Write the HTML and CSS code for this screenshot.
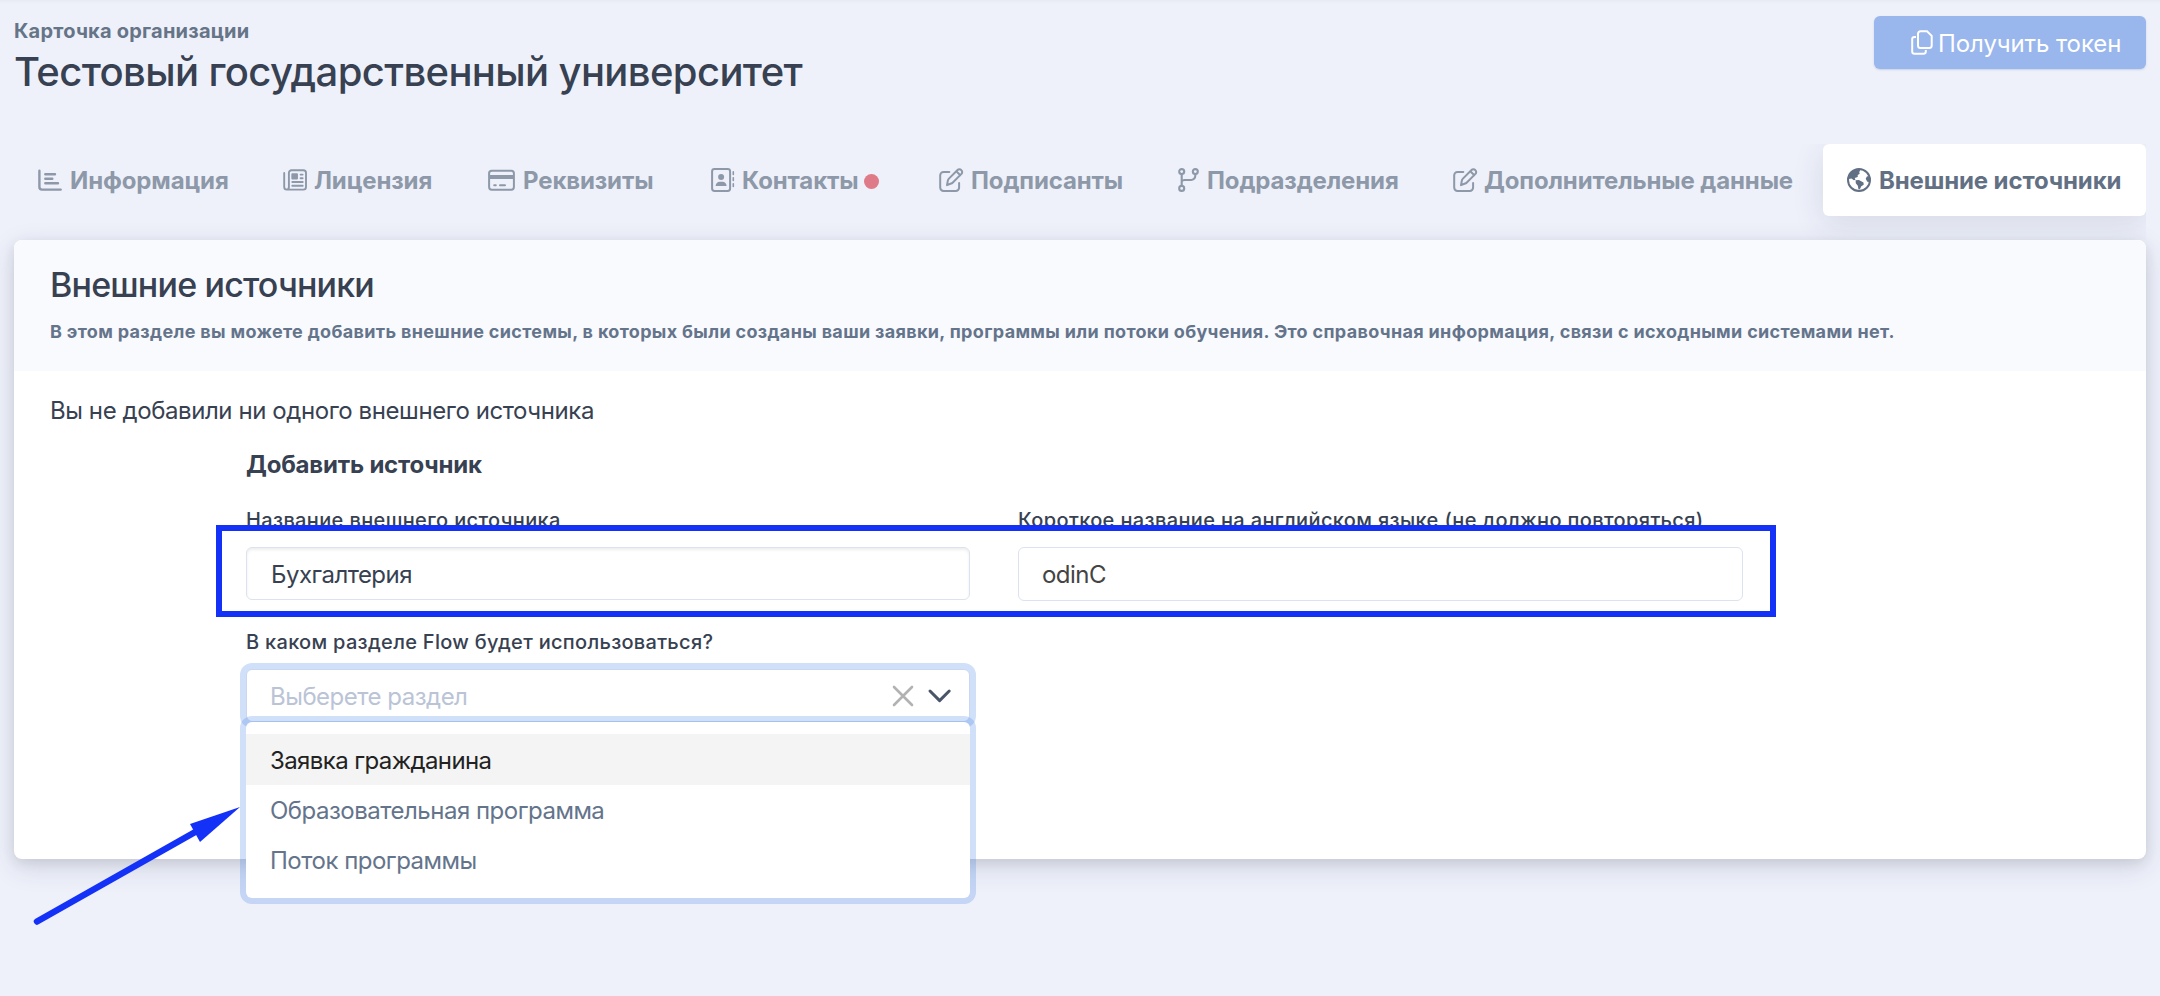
FILE: index.html
```html
<!DOCTYPE html>
<html lang="ru">
<head>
<meta charset="utf-8">
<title>Карточка организации</title>
<link rel="stylesheet" href="styles.css">
</head>
<body>
<div class="page">
  <header class="head">
    <div>
      <div class="pretitle">Карточка организации</div>
      <h1 class="title">Тестовый государственный университет</h1>
    </div>
    <button class="btn">
      <svg class="ico" width="22" height="25" viewBox="0 0 22 25"><g fill="none" stroke="currentColor" stroke-width="2"><path d="M9.500 1.200h6.500l4.700 4.700v9.600a2.500 2.500 0 0 1-2.500 2.500h-8.700a2.500 2.500 0 0 1-2.500-2.500V3.700a2.500 2.500 0 0 1 2.500-2.500z"/><path d="M5 7H3.500A2.300 2.300 0 0 0 1.200 9.300v12.200a2.300 2.300 0 0 0 2.300 2.300h9a2.300 2.300 0 0 0 2.300-2.300V20"/></g></svg>
      <span class="btn-text">Получить токен</span>
    </button>
  </header>
  <nav class="tabs">
    <a class="tab"><svg class="ico" width="24" height="24" viewBox="0 0 24 24"><g fill="none" stroke="currentColor" stroke-width="2.400" stroke-linecap="round" stroke-linejoin="round"><path d="M1.400 2.800v16.200a2.600 2.600 0 0 0 2.600 2.600h18.700M7.300 6.300h9.700M7.300 10.800h7M7.300 15.300h12.700"/></g></svg><span>Информация</span></a>
    <a class="tab"><svg class="ico" width="24" height="24" viewBox="0 0 24 24"><g fill="none" stroke="currentColor" stroke-width="1.900" stroke-linecap="round" stroke-linejoin="round"><path d="M1.200 5v14a2.600 2.600 0 0 0 2.600 2.600h16.600a2.600 2.600 0 0 0 2.600-2.600V4.800a2.600 2.600 0 0 0-2.600-2.600H8.500A2.600 2.600 0 0 0 5.900 4.800V19a2.500 2.500 0 0 1-2.300 2.600M9.300 14h10.400M9.300 17.800h10.400M17.600 6.600h2M17.600 10.300h2"/><rect x="9.300" y="6.200" width="4.700" height="4.400" fill="currentColor"/></g></svg><span>Лицензия</span></a>
    <a class="tab"><svg class="ico" width="27" height="24" viewBox="0 0 27 24"><rect x="1.100" y="2.700" width="24.800" height="19" rx="2.600" fill="none" stroke="currentColor" stroke-width="2"/><path fill="currentColor" d="M1 7h25v4H1z"/><path d="M6.200 17.300h1.600M12 17.300h5" stroke="currentColor" stroke-width="2" stroke-linecap="round"/></svg><span>Реквизиты</span></a>
    <a class="tab"><svg class="ico" width="24" height="24" viewBox="0 0 24 24"><rect x="1.100" y="1.100" width="18" height="21.800" rx="2.400" fill="none" stroke="currentColor" stroke-width="2"/><circle cx="10.100" cy="8.900" r="3" fill="currentColor"/><path fill="currentColor" d="M4.600 18c0-2.600 2-4.300 4-4.300h3c2 0 4 1.700 4 4.300z"/><path d="M22.300 3.800v2.600M22.300 9.800v2.600M22.300 15.800v2.600" stroke="currentColor" stroke-width="1.600" stroke-linecap="round"/></svg><span>Контакты</span><i class="dot"></i></a>
    <a class="tab"><svg class="ico" width="25" height="24" viewBox="0 0 25 24"><g fill="none" stroke="currentColor" stroke-width="2" stroke-linecap="round" stroke-linejoin="round"><path d="M10.300 4H4.500A3.300 3.300 0 0 0 1.200 7.300v12.300a3.300 3.300 0 0 0 3.300 3.300h12.300a3.300 3.300 0 0 0 3.300-3.300v-4.500M8 17.100l.9-4.700a3 3 0 0 1 .8-1.500l8.800-8.900a2.500 2.500 0 0 1 3.700 0l.2.200a2.500 2.500 0 0 1 0 3.700l-8.800 8.800a3 3 0 0 1-1.500.8zM17.300 3.300l4 4"/></g></svg><span>Подписанты</span></a>
    <a class="tab"><svg class="ico" width="21" height="24" viewBox="0 0 21 24"><g fill="none" stroke="currentColor" stroke-width="2.100"><circle cx="3.700" cy="3.600" r="2.500"/><circle cx="17.300" cy="3.600" r="2.500"/><circle cx="3.700" cy="20.400" r="2.500"/><path d="M3.700 6v12M3.700 13.500c.6-1 1.600-1.500 2.800-1.500H13a4.200 4.200 0 0 0 4.300-4.200V6"/></g></svg><span>Подразделения</span></a>
    <a class="tab"><svg class="ico" width="25" height="24" viewBox="0 0 25 24"><g fill="none" stroke="currentColor" stroke-width="2" stroke-linecap="round" stroke-linejoin="round"><path d="M10.300 4H4.500A3.300 3.300 0 0 0 1.200 7.300v12.300a3.300 3.300 0 0 0 3.300 3.300h12.300a3.300 3.300 0 0 0 3.300-3.300v-4.500M8 17.100l.9-4.700a3 3 0 0 1 .8-1.500l8.800-8.900a2.500 2.500 0 0 1 3.700 0l.2.200a2.500 2.500 0 0 1 0 3.700l-8.800 8.800a3 3 0 0 1-1.500.8zM17.300 3.300l4 4"/></g></svg><span>Дополнительные данные</span></a>
    <a class="tab tab-active"><svg class="ico" width="24" height="24" viewBox="0 0 24 24"><circle cx="12" cy="12" r="11" fill="none" stroke="currentColor" stroke-width="2"/><path fill="currentColor" d="M1.500 11C2 5.500 6 1.500 11.500 1l1.700 1.500-1 1.500.5 1.800-2 1.200v2l-3 1 .8 1.800-1.700.4-2.300-1.700z"/><path fill="currentColor" d="M8.600 12.200l3.300-.3 4.600 2.600.2 2.200-2.400 1.600-1.400 3-1.400.2-.7-3.800-2-2.500z"/><path fill="currentColor" d="M22.500 8.500l-2.500-.3-1.300 2.600 1.600 3 2.300.2z"/></svg><span>Внешние источники</span></a>
  </nav>
  <main class="card">
    <div class="card-head">
      <h2 class="card-title">Внешние источники</h2>
      <p class="card-sub">В этом разделе вы можете добавить внешние системы, в которых были созданы ваши заявки, программы или потоки обучения. Это справочная информация, связи с исходными системами нет.</p>
    </div>
    <div class="card-body">
      <p class="empty">Вы не добавили ни одного внешнего источника</p>
      <div class="form">
        <h3 class="form-title">Добавить источник</h3>
        <div class="row">
          <div class="field">
            <label class="label">Название внешнего источника</label>
            <div class="input input-inset">Бухгалтерия</div>
          </div>
          <div class="field">
            <label class="label">Короткое название на английском языке (не должно повторяться)</label>
            <div class="input input-tall">odinC</div>
          </div>
        </div>
        <label class="label label-section">В каком разделе Flow будет использоваться?</label>
        <div class="select">
          <span class="placeholder">Выберете раздел</span>
          <svg width="60" height="22" viewBox="0 0 60 22"><g fill="none" stroke-linecap="round" stroke-linejoin="round"><path d="M2 2l18 18M20 2L2 20" stroke="#b2b2b2" stroke-width="2.600"/><path d="M38 6l9.600 9.600L57.200 6" stroke="#4a5568" stroke-width="3"/></g></svg>
          <ul class="menu">
            <li class="option option-hover">Заявка гражданина</li>
            <li class="option">Образовательная программа</li>
            <li class="option">Поток программы</li>
          </ul>
        </div>
      </div>
    </div>
  </main>
  <div class="frame"></div>
  <svg class="arrow" width="212" height="124" viewBox="0 0 212 124"><path d="M7 116.500L167 26" stroke="#1431f8" stroke-width="6.500" stroke-linecap="round"/><path d="M210 2L160 19l10 18z" fill="#1431f8"/></svg>
</div>
</body>
</html>
```
FILE: styles.css
```css
* { box-sizing: border-box; }
body { margin: 0; font-family: Inter, sans-serif; font-size: 24px; color: #374151; background: #eef1fa; }
h1, h2, h3, p, ul { margin: 0; padding: 0; font-weight: inherit; }
.page { position: relative; height: 996px; padding: 16px 14px 0; overflow: hidden; background: linear-gradient(#e8ebf4, #eef1fa 4px); }
.ico { flex: none; display: block; }
.head { display: flex; justify-content: space-between; align-items: flex-start; height: 128px; }
.pretitle { padding-top: 3px; font-size: 20px; line-height: 24px; font-weight: 700; letter-spacing: .22px; color: #667488; }
.title { margin-top: 5px; font-size: 40px; line-height: 48px; font-weight: 500; letter-spacing: -.62px; }
.btn { display: flex; align-items: center; gap: 5px; width: 272px; height: 53px; padding: 0 0 0 37px; border: 0; border-radius: 6px; background: #99b6ed; box-shadow: 0 1px 2px rgba(60, 90, 150, .2); color: #fff; font: 400 24px/51px Inter, sans-serif; letter-spacing: -.1px; }
.btn-text { padding-top: 2px; }
.tabs { display: grid; grid-template-columns: 245px 205px 223px 228px 239px 275px 394px 323px; width: 2146px; height: 96px; margin-left: -14px; padding-left: 14px; overflow: hidden; }
.tab { display: flex; align-items: center; gap: 8px; height: 72px; padding-left: 24px; font-weight: 700; letter-spacing: -.13px; color: #8d98a8; }
.tab:nth-child(2), .tab:nth-child(4), .tab:nth-child(5) { gap: 7px; }
.tab:nth-child(7) { gap: 6px; }
.tab-active { border-radius: 6px; background: #fff; color: #627084; box-shadow: 0 8px 32px rgba(40, 50, 80, .12); }
.dot { width: 15px; height: 15px; margin: 3px 0 0 -2px; border-radius: 50%; background: #df7b88; }
.card { position: relative; height: 619px; border-radius: 8px; background: #fff; box-shadow: 0 8px 28px rgba(40, 50, 80, .14), 0 4px 12px rgba(40, 40, 40, .1); }
.card-head { height: 131px; padding: 24px 36px 0; border-radius: 8px 8px 0 0; background: #f9fafe; }
.card-title { font-size: 34px; line-height: 42px; font-weight: 500; letter-spacing: -.82px; }
.card-sub { margin-top: 14px; font-size: 18px; line-height: 24px; font-weight: 700; letter-spacing: .333px; white-space: nowrap; color: #64748b; }
.card-body { padding: 22px 36px 0; }
.empty { line-height: 36px; letter-spacing: -.42px; }
.form { width: 1497px; margin: 18px 0 0 196px; }
.form-title { font-size: 24px; line-height: 36px; font-weight: 700; letter-spacing: -.2px; }
.row { display: grid; grid-template-columns: 724px 725px; gap: 48px; height: 147px; padding-top: 25px; }
.label { display: block; height: 39px; font-size: 20px; line-height: 24px; font-weight: 500; letter-spacing: .36px; }
.label-section { letter-spacing: .3px; }
.input { display: flex; align-items: center; padding: 1px 0 0 24px; border: 1px solid #dbe3f0; border-radius: 6px; background: #fff; letter-spacing: -.53px; }
.input-inset { height: 53px; box-shadow: inset 0 2px 3px rgba(0, 0, 0, .07); }
.input-tall { height: 54px; padding-left: 23px; color: #444; }
.select { position: relative; display: flex; align-items: center; justify-content: space-between; width: 724px; height: 53px; padding: 0 17px 0 23px; border: 1px solid #c9d7f2; border-radius: 6px; background: #fff; box-shadow: 0 0 0 6px rgba(55, 120, 230, .23); }
.placeholder { padding-top: 2px; letter-spacing: -.5px; color: #bac4d6; }
.menu { position: absolute; left: -1px; top: 52px; width: 724px; height: 176px; padding-top: 12px; border-radius: 6px; background: #fff; box-shadow: 0 0 0 6px rgba(55, 120, 230, .23); list-style: none; }
.option { height: 50px; padding-left: 24px; line-height: 52px; letter-spacing: -.5px; color: #64748b; }
.option-hover { height: 51px; line-height: 53px; letter-spacing: -.6px; background: #f4f4f4; color: #222; }
.frame { position: absolute; left: 216px; top: 525px; width: 1560px; height: 92px; border: 6px solid #1431f8; }
.arrow { position: absolute; left: 30px; top: 805px; }
```
